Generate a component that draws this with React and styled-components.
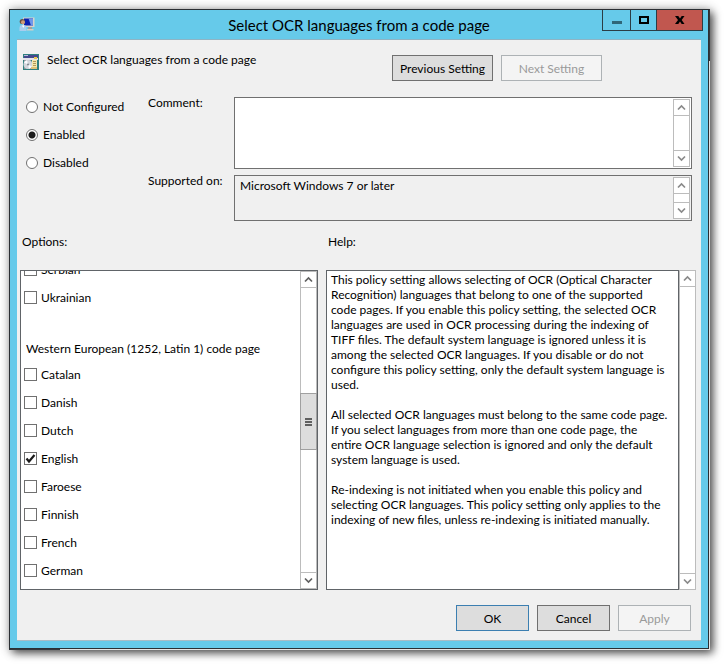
import React, { useState } from "react";
import styled, { createGlobalStyle, css } from "styled-components";

const options = [
    { type: "check", label: "Serbian" },
    { type: "check", label: "Ukrainian" },
    { type: "heading", label: "Western European (1252, Latin 1) code page" },
    { type: "check", label: "Catalan" },
    { type: "check", label: "Danish" },
    { type: "check", label: "Dutch" },
    { type: "check", label: "English" },
    { type: "check", label: "Faroese" },
    { type: "check", label: "Finnish" },
    { type: "check", label: "French" },
    { type: "check", label: "German" },
];

const helpText = [
    `This policy setting allows selecting of OCR (Optical Character
Recognition) languages that belong to one of the supported
code pages. If you enable this policy setting, the selected OCR
languages are used in OCR processing during the indexing of
TIFF files. The default system language is ignored unless it is
among the selected OCR languages. If you disable or do not
configure this policy setting, only the default system language is
used.`,
    `All selected OCR languages must belong to the same code page.
If you select languages from more than one code page, the
entire OCR language selection is ignored and only the default
system language is used.`,
    `Re-indexing is not initiated when you enable this policy and
selecting OCR languages. This policy setting only applies to the
indexing of new files, unless re-indexing is initiated manually.`,
];

const states = ["Not Configured", "Enabled", "Disabled"];

const ComputerIcon = () => (
    <svg width="16" height="16" viewBox="0 0 16 16" aria-hidden="true">
        <path d="M4 0.500h11.500v9.500H4z" fill="#d8d4cc" />
        <path d="M5 1.500h9v7H5z" fill="#0a1fb0" />
        <path d="M9.500 1.500H14v7h-2z" fill="#6f97ea" />
        <path d="M9 10h4v2H9z" fill="#a5a29a" />
        <path d="M8 12h6.500v1.500H8z" fill="#d5d0c4" />
        <circle cx="3.300" cy="4.500" r="2.600" fill="#6b5340" />
        <circle cx="4" cy="5.300" r="2" fill="#cf9a78" />
        <path d="M0.500 14V11q0-3 3-3h1q3 0 3 3v3z" fill="#a9cdee" />
        <path d="M3 8.500h2.500L4.300 11z" fill="#fff" />
    </svg>
)

const PolicyIcon = () => (
    <svg width="16" height="16" viewBox="0 0 16 16" aria-hidden="true">
        <path d="M0 0h16v16H0z" fill="#2f7f80" />
        <path d="M1 1h14v3H1z" fill="#44488c" />
        <path d="M1 1h4v1H1z" fill="#b9badb" />
        <path d="M0 4h15v2H0z" fill="#e4e2ea" />
        <path d="M11 3h3v2h-3z" fill="#e9c64c" />
        <path d="M1 6h7v9H1z" fill="#8f959c" />
        <circle cx="5" cy="10.500" r="4.500" fill="#d3d6dc" />
        <path d="M5 10.500L1 8.500A4.500 4.500 0 0 1 4 6.200z" fill="#fbfbff" />
        <path d="M5 10.500L9 12.500A4.500 4.500 0 0 1 6 14.800z" fill="#fbfbff" />
        <circle cx="5" cy="10.500" r="1" fill="#7a808a" />
        <path d="M9 6h5v8H9z" fill="#f4e7ae" />
        <path d="M8 13h6v2H8z" fill="#e0c277" />
        <path d="M10 7h3v1h-3zM10 9h3v1h-3zM10 11h3v1h-3z" fill="#b39a5a" />
    </svg>
)

const Chevron = ({ down }) => (
    <svg width="9" height="7" viewBox="0 0 9 7" aria-hidden="true">
        <path d={down ? "M1 1.500L4.500 5L8 1.500" : "M1 5.500L4.500 2L8 5.500"} fill="none" stroke="currentColor" strokeWidth="1.700" />
    </svg>
)

const ScrollBar = ({ thumb, dark }) => (
    <Track>
        <ArrowButton type="button" aria-label="Scroll up" $dark={dark} $side="bottom"><Chevron /></ArrowButton>
        <Trough>{thumb && <Thumb><i /><i /><i /></Thumb>}</Trough>
        <ArrowButton type="button" aria-label="Scroll down" $dark={dark} $side="top"><Chevron down /></ArrowButton>
    </Track>
)

export default function App() {
    const [state, setState] = useState("Enabled");
    const [checked, setChecked] = useState({ English: true });
    const [comment, setComment] = useState("");

    const toggle = (label) => {
        setChecked({ ...checked, [label]: !checked[label] });
    }

    return (
        <Page>
            <GlobalStyle />
            <Window>
                <TitleBar>
                    <ComputerIcon />
                    <Title>Select OCR languages from a code page</Title>
                    <WindowButtons>
                        <WindowButton aria-label="Minimize" $width={27}>
                            <svg width="10" height="10" viewBox="0 0 10 10"><path d="M0 6h10v3H0z" fill="#2f6678" /></svg>
                        </WindowButton>
                        <WindowButton aria-label="Maximize" $width={26}>
                            <svg width="10" height="8" viewBox="0 0 10 8"><path d="M1 1h8v6H1z" fill="none" stroke="#000" strokeWidth="2" /></svg>
                        </WindowButton>
                        <WindowButton aria-label="Close" $width={46} $close>
                            <svg width="10" height="8" viewBox="0 0 10 8"><path d="M0 0h3.300L5 2.500L6.700 0H9.500L6.700 4L9.500 8H6.700L5 5.500L3.300 8H0L3 4z" /></svg>
                        </WindowButton>
                    </WindowButtons>
                </TitleBar>

                <Client>
                    <Header>
                        <Heading><PolicyIcon /><h2>Select OCR languages from a code page</h2></Heading>
                        <Nav>
                            <Button $wide>Previous Setting</Button>
                            <Button $wide disabled>Next Setting</Button>
                        </Nav>
                    </Header>

                    <Settings>
                        <RadioGroup>
                            {states.map((s) => (
                                <RadioLabel key={s}>
                                    <Radio name="state" checked={state === s} onChange={() => setState(s)} />
                                    {s}
                                </RadioLabel>
                            ))}
                        </RadioGroup>
                        <Fields>
                            <FieldLabel htmlFor="comment">Comment:</FieldLabel>
                            <FieldBox $height={72}>
                                <TextArea id="comment" value={comment} onChange={(e) => setComment(e.target.value)} />
                                <ScrollBar />
                            </FieldBox>
                            <FieldLabel htmlFor="supported">Supported on:</FieldLabel>
                            <FieldBox $height={46} $readOnly>
                                <TextArea id="supported" readOnly value="Microsoft Windows 7 or later" />
                                <ScrollBar />
                            </FieldBox>
                        </Fields>
                    </Settings>

                    <Panels>
                        <OptionsColumn>
                            <PanelTitle>Options:</PanelTitle>
                            <OptionsBox>
                                <OptionList>
                                    {options.map((o) => o.type === "heading" ? (
                                        <GroupTitle key={o.label}>{o.label}</GroupTitle>
                                    ) : (
                                        <CheckLabel key={o.label}>
                                            <CheckWrap>
                                                <CheckBox checked={!!checked[o.label]} onChange={() => toggle(o.label)} />
                                                {checked[o.label] && (
                                                    <svg width="13" height="13" viewBox="0 0 13 13">
                                                        <path d="M2.500 6.500L5 9.500L10.500 3" fill="none" stroke="#1a1a1a" strokeWidth="2.200" />
                                                    </svg>
                                                )}
                                            </CheckWrap>
                                            {o.label}
                                        </CheckLabel>
                                    ))}
                                </OptionList>
                                <ScrollBar thumb dark />
                            </OptionsBox>
                        </OptionsColumn>
                        <HelpColumn>
                            <PanelTitle>Help:</PanelTitle>
                            <HelpRow>
                                <HelpBox>
                                    {helpText.map((p) => <p key={p}>{p}</p>)}
                                </HelpBox>
                                <ScrollBar />
                            </HelpRow>
                        </HelpColumn>
                    </Panels>

                    <Footer>
                        <Button $primary>OK</Button>
                        <Button>Cancel</Button>
                        <Button disabled>Apply</Button>
                    </Footer>
                </Client>
            </Window>
        </Page>
    )
}

const GlobalStyle = createGlobalStyle`
    * {
        box-sizing: border-box;
    }
    body {
        margin: 0;
        background-color: #fff;
        color: #000;
        font-family: Lato, "Open Sans", sans-serif;
        font-size: 12px;
        line-height: 15px;
    }
    button, input, textarea {
        font: inherit;
        margin: 0;
    }
    h1, h2, h3, p {
        margin: 0;
        font-weight: normal;
        font-size: inherit;
    }
    svg {
        display: block;
        flex: none;
    }
`
const Page = styled.div`
    display: flex;
    min-height: 100vh;
    padding: 9px 15px 15px 9px;
`
const Window = styled.main`
    position: relative;
    display: flex;
    flex-direction: column;
    flex: 1;
    min-width: 0;
    border: 1px solid #2b2f33;
    background-color: #66caea;
    box-shadow: 1px 1px 0 0 #e4e5e6, 4px 4px 8px 0 rgba(0, 0, 0, 0.6), 1px 1px 10px 1px rgba(0, 0, 0, 0.3);

    /* dark corners of the window behind */
    &::before, &::after {
        content: "";
        position: absolute;
        background-color: #33373c;
    }
    &::before {
        top: -1px;
        right: -2px;
        width: 1px;
        height: 52px;
    }
    &::after {
        bottom: -2px;
        left: -1px;
        width: 51px;
        height: 1px;
    }
`
const TitleBar = styled.header`
    display: grid;
    grid-template-columns: 1fr auto 1fr;
    align-items: center;
    height: 29px;
    padding: 0 5px;

    > svg {
        margin-left: 4px;
    }
`
const Title = styled.h1`
    font-size: 15px;
    line-height: 20px;
`
const WindowButtons = styled.div`
    display: flex;
    justify-self: end;
    align-self: start;
    border: 1px solid #2b3d45;
    border-top: none;
`
const WindowButton = styled.button`
    display: flex;
    align-items: center;
    justify-content: center;
    width: ${(props) => props.$width}px;
    height: 20px;
    padding: 0;
    border: none;
    background-color: ${(props) => (props.$close ? "#c1574f" : "transparent")};

    & + & {
        border-left: 1px solid #2b3d45;
    }
`
const Client = styled.section`
    display: flex;
    flex-direction: column;
    flex: 1;
    margin: 0 7px 7px;
    border-top: 1px solid #8fb4c4;
    border-bottom: 1px solid #a9bcc6;
    background-color: #f0f0f0;
`
const Header = styled.div`
    display: flex;
    justify-content: space-between;
    padding: 14px 99px 0 6px;
`
const Heading = styled.div`
    display: flex;
    gap: 8px;

    h2 {
        line-height: 12px;
    }
`
const Nav = styled.div`
    display: flex;
    gap: 8px;
    padding-top: 1px;
`
const Button = styled.button`
    width: ${(props) => (props.$wide ? 101 : 73)}px;
    height: 26px;
    padding: 0;
    border: 1px solid ${(props) => (props.$primary ? "#3c7fb1" : "#707070")};
    background-color: #dddddd;
    color: #000;
    white-space: nowrap;

    &:disabled {
        border-color: #adb2b5;
        background-color: #f4f4f4;
        color: #9a9a9a;
    }
`
const Settings = styled.div`
    display: flex;
    padding: 16px 9px 0;
`
const RadioGroup = styled.div`
    display: flex;
    flex-direction: column;
    width: 122px;
    padding-top: 2px;
    gap: 13px;
`
const RadioLabel = styled.label`
    display: flex;
    align-items: center;
    gap: 5px;
`
const Radio = styled.input.attrs({ type: "radio" })`
    appearance: none;
    width: 12px;
    height: 12px;
    border: 1px solid #707070;
    border-radius: 50%;
    background-color: #fff;

    &:checked {
        background-image: radial-gradient(circle, #1a1a1a 3px, transparent 4px);
    }
`
const Fields = styled.div`
    display: grid;
    grid-template-columns: 86px 1fr;
    row-gap: 6px;
    flex: 1;
`
const FieldLabel = styled.label`
    line-height: 12px;
    white-space: nowrap;
`
const FieldBox = styled.div`
    display: flex;
    height: ${(props) => props.$height}px;
    padding: 1px;
    border: 1px solid #707070;
    background-color: ${(props) => (props.$readOnly ? "#f0f0f0" : "#fff")};
`
const TextArea = styled.textarea`
    flex: 1;
    min-width: 0;
    padding: 1px 4px;
    border: none;
    outline: none;
    resize: none;
    overflow: hidden;
    background: transparent;
    color: #000;
`
const Track = styled.div`
    display: flex;
    flex-direction: column;
    flex: none;
    width: 17px;
    border: 1px solid #bcbcbc;
    background-color: #fff;
`
const ArrowButton = styled.button`
    display: flex;
    align-items: center;
    justify-content: center;
    height: 16px;
    padding: 0;
    border: none;
    border-${(props) => props.$side}: 1px solid #bcbcbc;
    background-color: #fff;
    color: ${(props) => (props.$dark ? "#606060" : "#8a8a8a")};
`
const Trough = styled.div`
    display: flex;
    flex-direction: column;
    flex: 1;
`
const Thumb = styled.div`
    display: flex;
    flex-direction: column;
    align-items: center;
    justify-content: center;
    gap: 1px;
    height: 57px;
    margin: 105px -1px 0;
    border: 1px solid #a0a0a0;
    background-color: #dddddd;

    i {
        width: 7px;
        height: 2px;
        background-color: #606060;
    }
`
const Panels = styled.div`
    display: flex;
    flex: 1;
    gap: 8px;
    padding: 13px 5px 0 3px;
`
const column = css`
    display: flex;
    flex-direction: column;
    min-width: 0;
`
const OptionsColumn = styled.section`
    ${column}
    flex: 298;
`
const HelpColumn = styled.section`
    ${column}
    flex: 370;
`
const PanelTitle = styled.h3`
    padding: 0 2px;
    margin-bottom: 21px;
`
const OptionsBox = styled.div`
    display: flex;
    flex: 1;
    overflow: hidden;
    border: 1px solid #606468;
    background-color: #fff;
`
const OptionList = styled.div`
    display: flex;
    flex-direction: column;
    flex: 1;
    /* list is scrolled part way through the first row */
    margin-top: -16px;
    padding-left: 3px;
`
const CheckLabel = styled.label`
    display: flex;
    align-items: center;
    gap: 4px;
    height: 28px;
`
const CheckWrap = styled.span`
    display: grid;

    > * {
        grid-area: 1 / 1;
    }
    svg {
        pointer-events: none;
    }
`
const CheckBox = styled.input.attrs({ type: "checkbox" })`
    appearance: none;
    width: 13px;
    height: 13px;
    border: 1px solid #707070;
    background-color: #fff;
`
const GroupTitle = styled.h3`
    padding: 30px 0 4px 2px;
`
const HelpRow = styled.div`
    display: flex;
    flex: 1;
`
const HelpBox = styled.div`
    display: flex;
    flex-direction: column;
    gap: 15px;
    flex: 1;
    min-width: 0;
    padding: 1px 0 1px 4px;
    border: 1px solid #606468;
    background-color: #fff;
    white-space: pre;
`
const Footer = styled.footer`
    display: flex;
    justify-content: flex-end;
    gap: 8px;
    padding: 15px 10px 9px;
`
